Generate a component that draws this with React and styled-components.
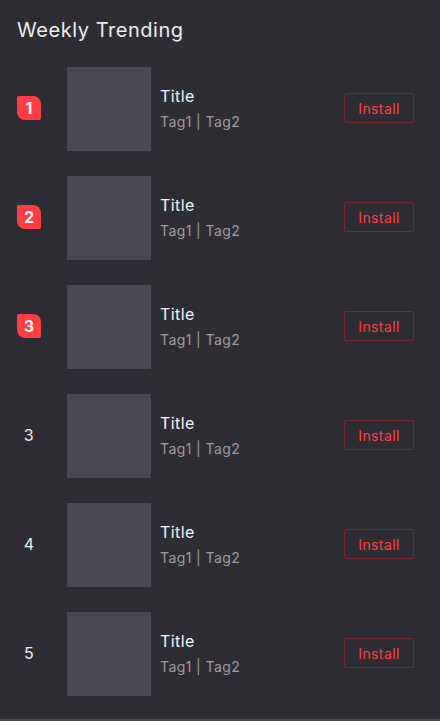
import React from 'react'
import styled, { createGlobalStyle } from 'styled-components'

const GlobalStyle = createGlobalStyle`
  html, body {
    margin: 0;
    padding: 0;
    background: #47464d;
  }
  body {
    font-family: Inter, 'Noto Sans', sans-serif;
    letter-spacing: 0.4px;
  }
`

const Panel = styled.div`
  height: 719px;
  overflow: hidden;
  background: #2e2d33;
  box-sizing: border-box;
  padding: 18px 26px 0 17px;
`

const Heading = styled.h1`
  margin: 0 0 24px;
  font-size: 20px;
  line-height: 25px;
  font-weight: 400;
  letter-spacing: 0.55px;
  color: #ececef;
`

const List = styled.div`
  display: flex;
  flex-direction: column;
  gap: 25px;
`

const Row = styled.div`
  display: flex;
  align-items: center;
  height: 84px;
`

const RankCell = styled.div`
  width: 24px;
  margin-right: 26px;
  display: flex;
  justify-content: center;
  margin-top: -2px;
`

const Badge = styled.span`
  width: 24px;
  height: 24px;
  display: flex;
  align-items: center;
  justify-content: center;
  background: #fe3d45;
  color: #f3f3f3;
  font-size: 16px;
  font-weight: 700;
  letter-spacing: 0;
  border-radius: 2px 8px 2px 8px;
`

const Rank = styled.span`
  color: #ececef;
  font-size: 16px;
  line-height: 24px;
`

const Thumb = styled.div`
  width: 84px;
  height: 84px;
  background: #4a4853;
  flex-shrink: 0;
`

const Info = styled.div`
  flex: 1;
  margin-left: 9px;
  display: flex;
  flex-direction: column;
  gap: 5px;
  margin-top: -2px;
`

const Name = styled.div`
  color: #f3f3f5;
  font-size: 16px;
  line-height: 22px;
`

const Tags = styled.div`
  color: #9d9ca3;
  font-size: 14px;
  line-height: 20px;
`

const InstallButton = styled.button`
  width: 70px;
  height: 30px;
  background: transparent;
  border: 1px solid #7a2630;
  border-radius: 2px;
  color: #fe3d45;
  font-family: inherit;
  font-size: 14px;
  letter-spacing: 0.4px;
  padding: 0;
  cursor: pointer;
  margin-top: -2px;
`

const items = [
  { rank: '1', top: true },
  { rank: '2', top: true },
  { rank: '3', top: true },
  { rank: '3' },
  { rank: '4' },
  { rank: '5' }
]

export default function App () {
  return (
    <>
      <GlobalStyle />
      <Panel>
        <Heading>Weekly Trending</Heading>
        <List>
          {items.map((item, i) => (
            <Row key={i}>
              <RankCell>
                {item.top ? <Badge>{item.rank}</Badge> : <Rank>{item.rank}</Rank>}
              </RankCell>
              <Thumb />
              <Info>
                <Name>Title</Name>
                <Tags>Tag1 | Tag2</Tags>
              </Info>
              <InstallButton>Install</InstallButton>
            </Row>
          ))}
        </List>
      </Panel>
    </>
  )
}
